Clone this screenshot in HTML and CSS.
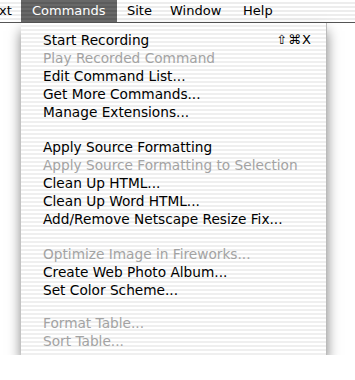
FILE: index.html
```html
<!DOCTYPE html>
<html lang="en">
<head>
  <meta charset="UTF-8">
  <title>Commands menu</title>
  <link rel="stylesheet" href="styles.css">
</head>
<body>
  <div class="menubar">
    <span class="bar-item bar-cut">xt</span>
    <span class="bar-item bar-open">Commands</span>
    <span class="bar-item bar-site">Site</span>
    <span class="bar-item bar-window">Window</span>
    <span class="bar-item">Help</span>
  </div>
  <div class="menu">
    <div class="item">Start Recording<span class="key">⇧⌘X</span></div>
    <div class="item off">Play Recorded Command</div>
    <div class="item">Edit Command List...</div>
    <div class="item">Get More Commands...</div>
    <div class="item">Manage Extensions...</div>
    <div class="sep"></div>
    <div class="item">Apply Source Formatting</div>
    <div class="item off">Apply Source Formatting to Selection</div>
    <div class="item">Clean Up HTML...</div>
    <div class="item">Clean Up Word HTML...</div>
    <div class="item">Add/Remove Netscape Resize Fix...</div>
    <div class="sep"></div>
    <div class="item off">Optimize Image in Fireworks...</div>
    <div class="item">Create Web Photo Album...</div>
    <div class="item">Set Color Scheme...</div>
    <div class="sep sep-short"></div>
    <div class="item off">Format Table...</div>
    <div class="item off">Sort Table...</div>
  </div>
</body>
</html>
```

FILE: styles.css
```css
body {
  margin: 0;
  padding: 0;
  background: #fff;
  font-family: "DejaVu Sans", "Liberation Sans", sans-serif;
  font-size: 13px;
  color: #000;
}

.menubar {
  display: flex;
  height: 22px;
  border-bottom: 1px solid #555;
  background: repeating-linear-gradient(#fff 0, #fff 2px, #ededed 2px, #ededed 4px);
}

.bar-item {
  line-height: 22px;
  padding-left: 10px;
  box-sizing: border-box;
}

/* the word before Commands is cut off by the left edge */
.bar-cut {
  width: 21px;
  padding-left: 0;
  text-indent: -1px;
}

.bar-open {
  width: 96px;
  padding-left: 11px;
  color: #fff;
  background: repeating-linear-gradient(#686868 0, #686868 2px, #5c5c5c 2px, #5c5c5c 4px);
}

.bar-site {
  width: 43px;
}

.bar-window {
  width: 73px;
}

.menu {
  width: 305px;
  margin-left: 21px;
  padding: 8px 0 5px;
  border-right: 1px solid #bbb;
  font-size: 13.7px;
  background: repeating-linear-gradient(#fff 0, #fff 2px, #efefef 2px, #efefef 4px);
  box-shadow: 0 8px 12px rgba(0, 0, 0, 0.5);
}

.item {
  display: flex;
  justify-content: space-between;
  height: 18px;
  line-height: 18px;
  padding: 0 14px 0 22px;
}

.item.off {
  color: #a3a3a3;
}

.key {
  font-size: 13px;
  letter-spacing: 1px;
}

.sep {
  height: 17px;
}

.sep-short {
  height: 15px;
}
```
